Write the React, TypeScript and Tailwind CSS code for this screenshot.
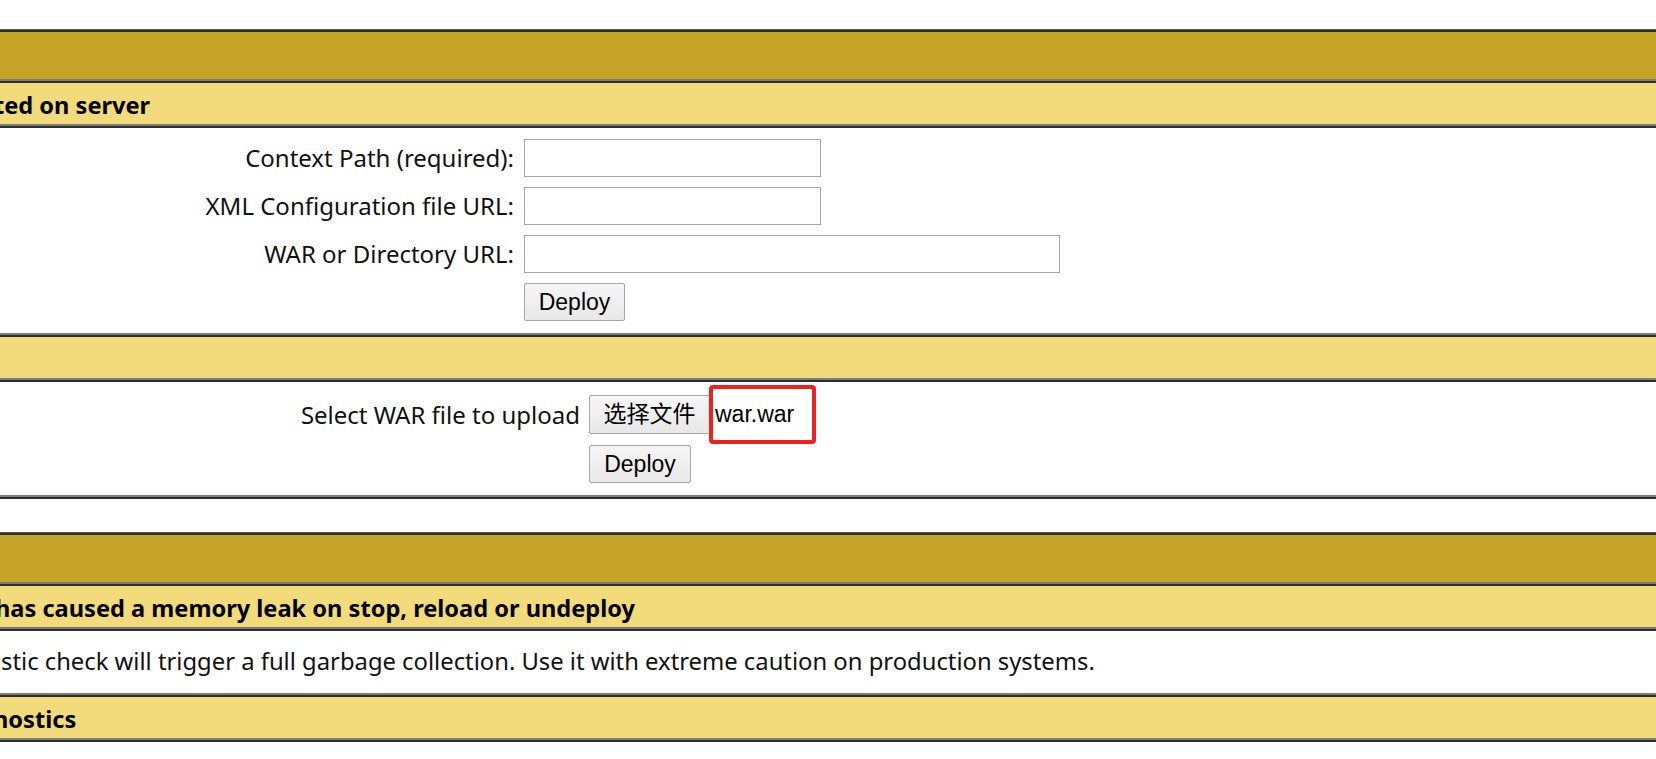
import React from "react";

const sans = "font-['Noto_Sans',sans-serif]";
const ctl = "font-['Liberation_Sans','Noto_Sans_CJK_SC',sans-serif]";

// One table row: dark top edge, grey bottom edge, like the old bordered tables
const Row = ({ className, children }: { className: string; children?: React.ReactNode }) => (
  <div className={`border-t-2 border-b-2 border-t-[#2e2e2e] border-b-[#7c7c7c] overflow-hidden ${className}`}>
    {children}
  </div>
);

const Title = () => <Row className="h-[51px] bg-[#c4a326]" />;

const Header = ({ text, shift }: { text: string; shift: string }) => (
  <Row className="h-[45px] bg-[#f2db7a] flex items-center pt-[4px]">
    <span className={`${sans} ${shift} whitespace-nowrap text-[23.6px] font-bold text-black leading-none`}>{text}</span>
  </Row>
);

const Button = ({ label, w }: { label: string; w: string }) => (
  <button
    className={`${ctl} ${w} h-[38px] border border-[#a6a6a6] rounded-[2px] bg-gradient-to-b from-[#f6f6f6] to-[#e8e8e8] text-[23px] text-black leading-none`}
  >
    {label}
  </button>
);

const TextInput = ({ w }: { w: string }) => (
  <input className={`${w} h-[38px] border border-[#a9a9a9] bg-white`} />
);

const Label = ({ children }: { children: React.ReactNode }) => (
  <span className={`${sans} text-[24px] text-[#111] text-right whitespace-nowrap leading-none`}>{children}</span>
);

export default function App() {
  return (
    <div className="w-[1656px] h-[759px] overflow-hidden bg-white pt-[29px]">
      {/* Deploy */}
      <div className="border-t border-t-[#555] border-b-2 border-b-[#2e2e2e]">
        <Title />
        <Header text="ted on server" shift="-ml-[6px]" />
        <Row className="h-[209px] bg-white pt-[11px]">
          <div className="grid grid-cols-[514px_auto] gap-x-[10px] gap-y-[10px] items-center">
            <Label>Context Path (required):</Label>
            <TextInput w="w-[297px]" />
            <Label>XML Configuration file URL:</Label>
            <TextInput w="w-[297px]" />
            <Label>WAR or Directory URL:</Label>
            <TextInput w="w-[536px]" />
            <span />
            <div>
              <Button label="Deploy" w="w-[101px]" />
            </div>
          </div>
        </Row>
        <Header text="" shift="" />
        <Row className="h-[117px] bg-white pt-[13px]">
          <div className="grid grid-cols-[580px_auto] gap-x-[9px] gap-y-[11px] items-center">
            <Label>Select WAR file to upload</Label>
            <div className="relative flex items-center h-[39px]">
              <button
                className={`${ctl} w-[121px] h-[39px] border border-[#a6a6a6] rounded-[2px] bg-gradient-to-b from-[#f6f6f6] to-[#e8e8e8] text-[23px] text-black leading-none`}
              >
                选择文件
              </button>
              <span className={`${ctl} ml-[5px] text-[23px] text-black leading-none`}>war.war</span>
              <div className="absolute left-[120px] top-[-10px] w-[107px] h-[59px] border-[4px] border-[#f0201c] rounded-[4px]" />
            </div>
            <span />
            <div>
              <Button label="Deploy" w="w-[102px]" />
            </div>
          </div>
        </Row>
      </div>

      {/* Diagnostics */}
      <div className="mt-[33px] border-t border-t-[#555]">
        <Title />
        <Header text="has caused a memory leak on stop, reload or undeploy" shift="-ml-[5px]" />
        <Row className="h-[66px] bg-white flex items-center">
          <span className={`${sans} ml-[1px] whitespace-nowrap text-[23.8px] text-[#111] leading-none`}>
            stic check will trigger a full garbage collection. Use it with extreme caution on production systems.
          </span>
        </Row>
        <Header text="nostics" shift="-ml-[7px]" />
        <Row className="h-[60px] bg-white" />
      </div>
    </div>
  );
}
